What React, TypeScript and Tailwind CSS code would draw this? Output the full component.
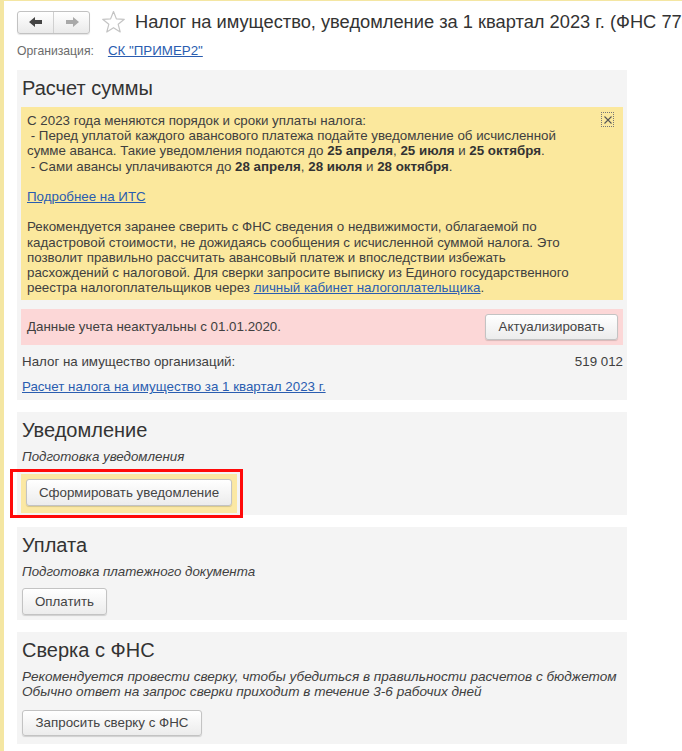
import React from "react";

function Btn({ children, className = "" }: { children: React.ReactNode; className?: string }) {
  return (
    <div
      className={
        "flex items-center justify-center rounded-[3px] border border-[#c3c3c3] bg-gradient-to-b from-white to-[#ececec] text-[#444] text-[13.33px] shadow-[0_1px_1px_rgba(0,0,0,0.15)] whitespace-nowrap " +
        className
      }
    >
      {children}
    </div>
  );
}

function Panel({ title, children, className = "" }: { title: string; children: React.ReactNode; className?: string }) {
  return (
    <div className={"bg-[#f4f4f4] px-[4px] pt-[5px] " + className}>
      <div className="h-[26px] leading-[26px] text-[20px] text-[#333] pl-[1px]">{title}</div>
      {children}
    </div>
  );
}

export default function App() {
  return (
    <div className="w-[682px] h-[751px] overflow-hidden bg-white border-l-[4px] border-t border-[#f4e6a2] font-['Liberation_Sans',Arial,sans-serif] text-[13.33px] text-[#404040]">
      <div className="pl-[13px]">
        {/* header */}
        <div className="flex items-center h-[24px] mt-[9px] whitespace-nowrap">
          <div className="flex shrink-0 h-[23px] rounded-[3px] border border-[#c2c2c2] bg-gradient-to-b from-white to-[#eaeaea] shadow-[0_1px_1px_rgba(0,0,0,0.1)]">
            <div className="w-[36px] flex items-center justify-center border-r border-[#d0d0d0]">
              <svg width="14" height="10" viewBox="0 0 14 10">
                <path d="M0 5 L6 0 L6 3 L13 3 L13 7 L6 7 L6 10 Z" fill="#444" />
              </svg>
            </div>
            <div className="w-[35px] flex items-center justify-center">
              <svg width="14" height="10" viewBox="0 0 14 10">
                <path d="M14 5 L8 0 L8 3 L1 3 L1 7 L8 7 L8 10 Z" fill="#a9a9a9" />
              </svg>
            </div>
          </div>
          <svg className="ml-[11px] shrink-0" width="25" height="24" viewBox="0 0 25 24">
            <path
              d="M12.5 1.5 L15.4 8.9 L23.3 9.3 L17.2 14.3 L19.2 22 L12.5 17.7 L5.8 22 L7.8 14.3 L1.7 9.3 L9.6 8.9 Z"
              fill="none"
              stroke="#c4c4c4"
              strokeWidth="1.2"
              strokeLinejoin="round"
            />
          </svg>
          <div className="ml-[9px] text-[18.3px] text-[#333] leading-[24px]">
            Налог на имущество, уведомление за 1 квартал 2023 г. (ФНС 7701)
          </div>
        </div>

        {/* org row */}
        <div className="flex items-center h-[16px] mt-[9px] leading-[16px]">
          <span className="text-[#6b6b6b] text-[12.2px]">Организация:</span>
          <span className="ml-[14px] text-[#2a5db0] underline">СК "ПРИМЕР2"</span>
        </div>

        {/* panels */}
        <div className="w-[610px] mt-[11px] flex flex-col gap-[12px]">
          <Panel title="Расчет суммы" className="pb-[4px]">
            <div className="relative mt-[6px] bg-[#fbe89d] pl-[6px] pr-[10px] pt-[6px] pb-[5px] leading-[15.2px] whitespace-nowrap">
              <div className="absolute right-[9px] top-[5px] w-[13px] h-[15px] border border-dotted border-[#777] flex items-center justify-center">
                <svg width="8" height="8" viewBox="0 0 8 8">
                  <path d="M0.5 0.5 L7.5 7.5 M7.5 0.5 L0.5 7.5" stroke="#555" strokeWidth="1.1" />
                </svg>
              </div>
              <div>С 2023 года меняются порядок и сроки уплаты налога:</div>
              <div>&nbsp;- Перед уплатой каждого авансового платежа подайте уведомление об исчисленной</div>
              <div>
                сумме аванса. Такие уведомления подаются до <b className="text-[#333]">25 апреля</b>,{" "}
                <b className="text-[#333]">25 июля</b> и <b className="text-[#333]">25 октября</b>.
              </div>
              <div>
                &nbsp;- Сами авансы уплачиваются до <b className="text-[#333]">28 апреля</b>,{" "}
                <b className="text-[#333]">28 июля</b> и <b className="text-[#333]">28 октября</b>.
              </div>
              <div>&nbsp;</div>
              <div>
                <span className="text-[#2a5db0] underline">Подробнее на ИТС</span>
              </div>
              <div>&nbsp;</div>
              <div>Рекомендуется заранее сверить с ФНС сведения о недвижимости, облагаемой по</div>
              <div>кадастровой стоимости, не дожидаясь сообщения с исчисленной суммой налога. Это</div>
              <div>позволит правильно рассчитать авансовый платеж и впоследствии избежать</div>
              <div>расхождений с налоговой. Для сверки запросите выписку из Единого государственного</div>
              <div>
                реестра налогоплательщиков через{" "}
                <span className="text-[#2a5db0] underline">личный кабинет налогоплательщика</span>.
              </div>
            </div>

            <div className="mt-[9px] h-[36px] bg-[#fcd7d7] flex items-center justify-between pl-[6px] pr-[5px]">
              <span>Данные учета неактуальны с 01.01.2020.</span>
              <Btn className="w-[133px] h-[26px]">Актуализировать</Btn>
            </div>

            <div className="mt-[8px] h-[18px] leading-[18px] flex justify-between pl-[1px]">
              <span>Налог на имущество организаций:</span>
              <span>519 012</span>
            </div>
            <div className="mt-[7px] h-[18px] leading-[18px] pl-[1px]">
              <span className="text-[#2a5db0] underline">Расчет налога на имущество за 1 квартал 2023 г.</span>
            </div>
          </Panel>

          <Panel title="Уведомление" className="pb-[2px]">
            <div className="mt-[6px] h-[16px] leading-[16px] italic pl-[1px]">Подготовка уведомления</div>
            <div className="relative mt-[9px] w-[216px] bg-[#fbe8a3] pl-[5px] pt-[5px] pb-[7px]">
              <div className="absolute left-[-11px] top-[-5px] w-[233px] h-[49px] border-[3px] border-[#ff0a0a]" />
              <Btn className="w-[206px] h-[27px]">Сформировать уведомление</Btn>
            </div>
          </Panel>

          <Panel title="Уплата" className="pb-[5px]">
            <div className="mt-[6px] h-[16px] leading-[16px] italic pl-[1px]">Подготовка платежного документа</div>
            <div className="mt-[8px] pl-[1px]">
              <Btn className="w-[85px] h-[27px]">Оплатить</Btn>
            </div>
          </Panel>

          <Panel title="Сверка с ФНС" className="pb-[8px]">
            <div className="mt-[6px] leading-[15px] italic text-[13.6px] pl-[1px] whitespace-nowrap">
              <div>Рекомендуется провести сверку, чтобы убедиться в правильности расчетов с бюджетом</div>
              <div>Обычно ответ на запрос сверки приходит в течение 3-6 рабочих дней</div>
            </div>
            <div className="mt-[11px] pl-[1px]">
              <Btn className="w-[180px] h-[26px]">Запросить сверку с ФНС</Btn>
            </div>
          </Panel>
        </div>
      </div>
    </div>
  );
}
